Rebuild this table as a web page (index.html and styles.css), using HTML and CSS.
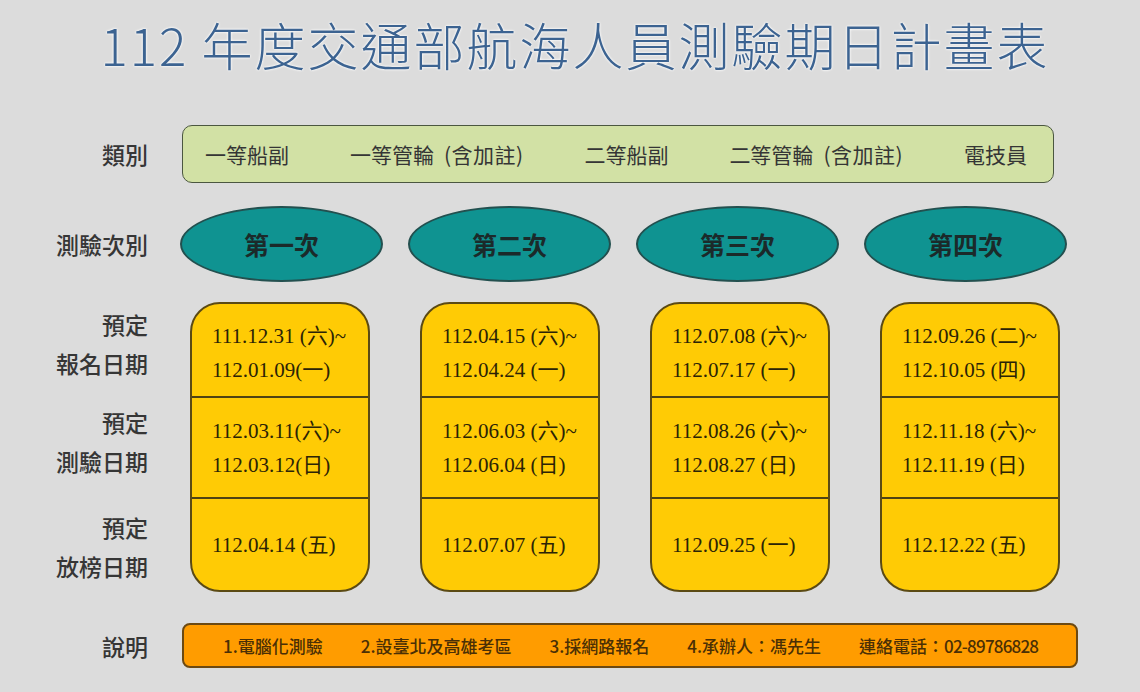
FILE: index.html
```html
<!DOCTYPE html>
<html lang="zh-Hant">
<head>
<meta charset="utf-8">
<title>112 年度交通部航海人員測驗期日計畫表</title>
<link rel="stylesheet" href="styles.css">
</head>
<body>
<div class="page">
  <h1 class="title">112 年度交通部航海人員測驗期日計畫表</h1>

  <div class="row row-cat">
    <div class="label">類別</div>
    <div class="cat-bar">
      <span>一等船副</span>
      <span>一等管輪<span class="paren">(含加註)</span></span>
      <span>二等船副</span>
      <span>二等管輪<span class="paren">(含加註)</span></span>
      <span>電技員</span>
    </div>
  </div>

  <div class="row row-round">
    <div class="label">測驗次別</div>
    <div class="rounds">
      <div class="oval">第一次</div>
      <div class="oval">第二次</div>
      <div class="oval">第三次</div>
      <div class="oval">第四次</div>
    </div>
  </div>

  <div class="row row-dates">
    <div class="date-labels">
      <div class="dl dl-1"><span>預定</span><span>報名日期</span></div>
      <div class="dl dl-2"><span>預定</span><span>測驗日期</span></div>
      <div class="dl dl-3"><span>預定</span><span>放榜日期</span></div>
    </div>
    <div class="cards">
      <div class="card">
        <div class="sec sec-1"><span>111.12.31 (六)~</span><span>112.01.09(一)</span></div>
        <div class="sec sec-2"><span>112.03.11(六)~</span><span>112.03.12(日)</span></div>
        <div class="sec sec-3"><span>112.04.14 (五)</span></div>
      </div>
      <div class="card">
        <div class="sec sec-1"><span>112.04.15 (六)~</span><span>112.04.24 (一)</span></div>
        <div class="sec sec-2"><span>112.06.03 (六)~</span><span>112.06.04 (日)</span></div>
        <div class="sec sec-3"><span>112.07.07 (五)</span></div>
      </div>
      <div class="card">
        <div class="sec sec-1"><span>112.07.08 (六)~</span><span>112.07.17 (一)</span></div>
        <div class="sec sec-2"><span>112.08.26 (六)~</span><span>112.08.27 (日)</span></div>
        <div class="sec sec-3"><span>112.09.25 (一)</span></div>
      </div>
      <div class="card">
        <div class="sec sec-1"><span>112.09.26 (二)~</span><span>112.10.05 (四)</span></div>
        <div class="sec sec-2"><span>112.11.18 (六)~</span><span>112.11.19 (日)</span></div>
        <div class="sec sec-3"><span>112.12.22 (五)</span></div>
      </div>
    </div>
  </div>

  <div class="row row-notes">
    <div class="label">說明</div>
    <div class="notes-bar">
      <span>1.電腦化測驗</span>
      <span>2.設臺北及高雄考區</span>
      <span>3.採網路報名</span>
      <span>4.承辦人：馮先生</span>
      <span>連絡電話：<span class="phone">02-89786828</span></span>
    </div>
  </div>
</div>
</body>
</html>
```

FILE: styles.css
```css
* { box-sizing: border-box; }

html, body {
  margin: 0;
  padding: 0;
  background: #dcdcdc;
}

body {
  font-family: "Noto Sans CJK TC", "Noto Sans", sans-serif;
  color: #2f2f2f;
}

.page {
  width: 1140px;
  height: 692px;
  overflow: hidden;
}

.title {
  margin: 0 0 48px 0;
  padding-top: 14px;
  padding-left: 10px;
  height: 77px;
  text-align: center;
  font-size: 51px;
  line-height: 60px;
  font-weight: 300;
  letter-spacing: 2px;
  color: #3c6391;
  text-shadow: 0 0 2px #ffffff, 0 0 3px #ffffff;
  white-space: nowrap;
}

.row {
  display: flex;
  align-items: center;
}

.label {
  width: 148px;
  flex: none;
  text-align: right;
  font-size: 23px;
  font-weight: 500;
  color: #363636;
  margin-right: 34px;
}

/* Category bar */
.row-cat { height: 58px; }

.cat-bar {
  width: 872px;
  height: 58px;
  display: flex;
  align-items: center;
  justify-content: space-between;
  padding: 0 26px 0 22px;
  background: #d2e1a5;
  border: 1.5px solid #4b5740;
  border-radius: 10px;
  font-size: 21px;
  color: #353535;
}

.paren {
  margin-left: 10px;
  letter-spacing: 0.5px;
}

/* Rounds */
.row-round {
  margin-top: 23px;
  height: 76px;
}

.rounds {
  display: flex;
  gap: 25px;
  margin-left: -2px;
}

.oval {
  width: 203px;
  height: 76px;
  border-radius: 50%;
  background: #0f9391;
  border: 2px solid #23504f;
  display: flex;
  align-items: center;
  justify-content: center;
  font-size: 25px;
  font-weight: 700;
  color: #1b2a2a;
}

/* Dates */
.row-dates {
  margin-top: 20px;
  align-items: stretch;
  height: 290px;
}

.date-labels {
  width: 148px;
  flex: none;
  display: flex;
  flex-direction: column;
  margin-right: 42px;
}

.dl {
  display: flex;
  flex-direction: column;
  align-items: flex-end;
  justify-content: center;
  font-size: 23px;
  font-weight: 500;
  line-height: 39px;
  color: #363636;
}

.dl-1 { height: 94px; padding-bottom: 10px; }
.dl-2 { height: 101px; padding-bottom: 10px; }
.dl-3 { height: 95px; padding-top: 4px; }

.cards {
  display: flex;
  gap: 50px;
}

.card {
  width: 180px;
  height: 290px;
  background: #ffcb05;
  border: 2px solid #5b4a14;
  border-radius: 30px;
  display: flex;
  flex-direction: column;
  overflow: hidden;
}

.sec {
  display: flex;
  flex-direction: column;
  justify-content: center;
  padding-left: 20px;
  font-family: "Liberation Serif", "Noto Sans CJK TC", serif;
  font-size: 21px;
  line-height: 34px;
  color: #2b2306;
  white-space: nowrap;
}

.sec-1 { height: 92px; padding-top: 6px; }
.sec-2 { height: 101px; border-top: 2px solid #4f4213; }
.sec-3 { height: 93px; border-top: 2px solid #4f4213; }

/* Notes */
.row-notes {
  margin-top: 31px;
  height: 45px;
}

.notes-bar {
  width: 896px;
  height: 45px;
  display: flex;
  align-items: center;
  gap: 38px;
  padding-left: 39px;
  background: #ff9c00;
  border: 2px solid #6c4912;
  border-radius: 8px;
  font-family: "Liberation Sans Narrow", "Noto Sans CJK TC", sans-serif;
  font-size: 17px;
  font-weight: 500;
  color: #4a2f05;
  white-space: nowrap;
}

.phone {
  letter-spacing: -0.8px;
}
```
